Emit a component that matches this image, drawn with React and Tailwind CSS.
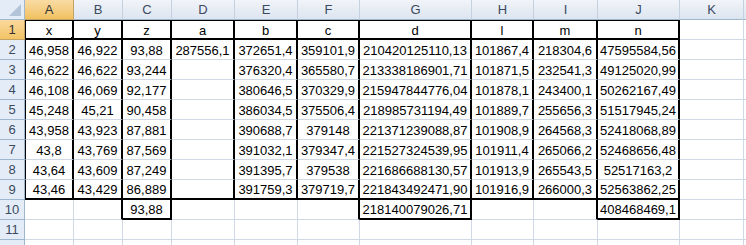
import React from 'react';

const cols = [
  { key: 'A', w: 'w-[49px]' },
  { key: 'B', w: 'w-[49px]' },
  { key: 'C', w: 'w-[49px]' },
  { key: 'D', w: 'w-[63px]' },
  { key: 'E', w: 'w-[63px]' },
  { key: 'F', w: 'w-[62px]' },
  { key: 'G', w: 'w-[112px]' },
  { key: 'H', w: 'w-[62px]' },
  { key: 'I', w: 'w-[64px]' },
  { key: 'J', w: 'w-[82px]' },
  { key: 'K', w: 'w-[64px]' },
  { key: '', w: 'w-[64px]' },
];

const rows = [
  ['x', 'y', 'z', 'a', 'b', 'c', 'd', 'l', 'm', 'n'],
  ['46,958', '46,922', '93,88', '287556,1', '372651,4', '359101,9', '210420125110,13', '101867,4', '218304,6', '47595584,56'],
  ['46,622', '46,622', '93,244', '', '376320,4', '365580,7', '213338186901,71', '101871,5', '232541,3', '49125020,99'],
  ['46,108', '46,069', '92,177', '', '380646,5', '370329,9', '215947844776,04', '101878,1', '243400,1', '50262167,49'],
  ['45,248', '45,21', '90,458', '', '386034,5', '375506,4', '218985731194,49', '101889,7', '255656,3', '51517945,24'],
  ['43,958', '43,923', '87,881', '', '390688,7', '379148', '221371239088,87', '101908,9', '264568,3', '52418068,89'],
  ['43,8', '43,769', '87,569', '', '391032,1', '379347,4', '221527324539,95', '101911,4', '265066,2', '52468656,48'],
  ['43,64', '43,609', '87,249', '', '391395,7', '379538', '221686688130,57', '101913,9', '265543,5', '52517163,2'],
  ['43,46', '43,429', '86,889', '', '391759,3', '379719,7', '221843492471,90', '101916,9', '266000,3', '52563862,25'],
  ['', '', '93,88', '', '', '', '218140079026,71', '', '', '408468469,1'],
  [],
  [],
];

// row 10 totals: boxed cells and the cells just left of them
const totalCols = [2, 6, 9];
const totalRightEdge = [1, 2, 5, 6, 8, 9];

const cellClass = (r, c) => {
  const inTable = r <= 8 && c <= 9;
  const right = inTable || (r === 9 && totalRightEdge.includes(c))
    ? 'border-r-2 border-r-black'
    : 'border-r border-r-[#d0d7e5]';
  const bottom = ((r === 0 || r === 8) && c <= 9) || (r === 9 && totalCols.includes(c))
    ? 'border-b-2 border-b-black'
    : 'border-b border-b-[#d0d7e5]';
  const top = r === 0 && c <= 9 ? 'border-t border-t-black' : '';
  const left = inTable && c === 0 ? 'border-l border-l-black' : '';
  return `${right} ${bottom} ${top} ${left}`;
};

const App = () => {
  return (
    <div className="w-[746px] h-[245px] overflow-hidden bg-white text-[13px] font-['Liberation_Sans',Arial,sans-serif] text-black leading-none">
      {/* column headers */}
      <div className="flex h-[20px]">
        <div className="w-[25px] shrink-0 bg-[#e4ecf7] border-r border-b border-[#9eb6ce] relative">
          <svg width="24" height="19" className="block">
            <polygon points="21,4 21,16 9,16" fill="#b3c4d8" />
          </svg>
        </div>
        {cols.map((col, i) => (
          <div
            key={i}
            className={`${col.w} shrink-0 flex items-center justify-center border-r border-b ${
              col.key === 'A'
                ? 'bg-gradient-to-b from-[#f9dba3] to-[#f1c15f] border-[#c2a265] text-[#333]'
                : 'bg-gradient-to-b from-[#f1f4f9] to-[#dde5ef] border-[#c5d1df] border-b-[#9eb6ce] text-[#3b4a60]'
            }`}
          >
            {col.key}
          </div>
        ))}
      </div>

      {rows.map((row, r) => (
        <div key={r} className="flex h-[20px]">
          <div
            className={`w-[25px] shrink-0 flex items-center justify-center border-r border-b ${
              r === 0
                ? 'bg-gradient-to-b from-[#f9d99d] to-[#f3c466] border-[#c2a265] text-[#333]'
                : 'bg-[#e4ecf7] border-[#9eb6ce] text-[#3b4a60]'
            }`}
          >
            {r < 11 ? r + 1 : ''}
          </div>
          {cols.map((col, c) => (
            <div
              key={c}
              className={`${col.w} shrink-0 flex items-center justify-center whitespace-nowrap overflow-hidden pt-[1px] relative ${cellClass(r, c)}`}
            >
              {row[c] || ''}
              {r === 0 && c === 0 && (
                <span className="absolute right-[-4px] bottom-[-4px] w-[6px] h-[6px] bg-black border border-white z-10" />
              )}
            </div>
          ))}
        </div>
      ))}
    </div>
  );
};

export default App;
